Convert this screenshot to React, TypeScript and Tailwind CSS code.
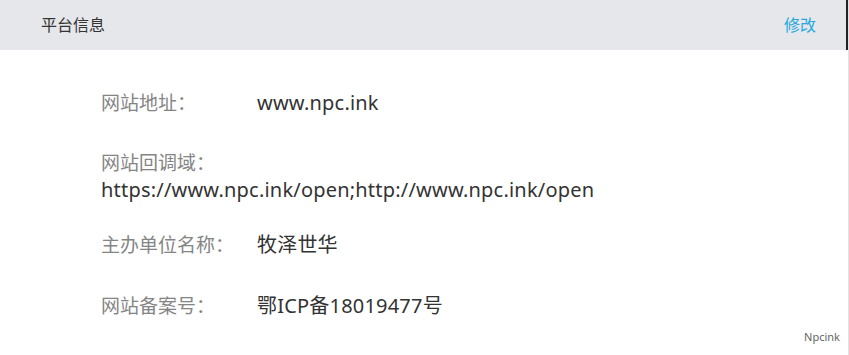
export default function App() {
  const font = { fontFamily: '"Noto Sans", "Noto Sans CJK SC", sans-serif' };
  return (
    <div className="w-[849px] h-[355px] bg-white relative border-r border-[#e2e2e2]" style={font}>
      <div className="h-[50px] bg-[#e6e7eb] flex items-center justify-between pl-[41px] pr-[30px] border-r-2 border-[#1f2329]">
        <span className="text-[16px] text-[#333]">平台信息</span>
        <span className="text-[16px] text-[#25a9e0]">修改</span>
      </div>
      <div className="pl-[101px] pt-[40px]">
        <div className="flex items-center h-[26px]">
          <span className="w-[156px] text-[19px] text-[#858585]">网站地址：</span>
          <span className="text-[20px] tracking-[0.2px] text-[#333]">www.npc.ink</span>
        </div>
        <div className="mt-[34px]">
          <div className="h-[26px] flex items-center text-[19px] text-[#858585]">网站回调域：</div>
          <div className="h-[27px] flex items-center text-[20px] tracking-[0.2px] text-[#333]">https://www.npc.ink/open;http://www.npc.ink/open</div>
        </div>
        <div className="flex items-center h-[26px] mt-[29px]">
          <span className="w-[156px] text-[19px] text-[#858585]">主办单位名称：</span>
          <span className="text-[20px] tracking-[0.2px] text-[#333]">牧泽世华</span>
        </div>
        <div className="flex items-center h-[26px] mt-[35px]">
          <span className="w-[156px] text-[19px] text-[#858585]">网站备案号：</span>
          <span className="text-[20px] tracking-[0.2px] text-[#333]">鄂ICP备18019477号</span>
        </div>
      </div>
      <span className="absolute right-[8px] bottom-[10px] text-[11px] text-[#666]">Npcink</span>
    </div>
  );
}
